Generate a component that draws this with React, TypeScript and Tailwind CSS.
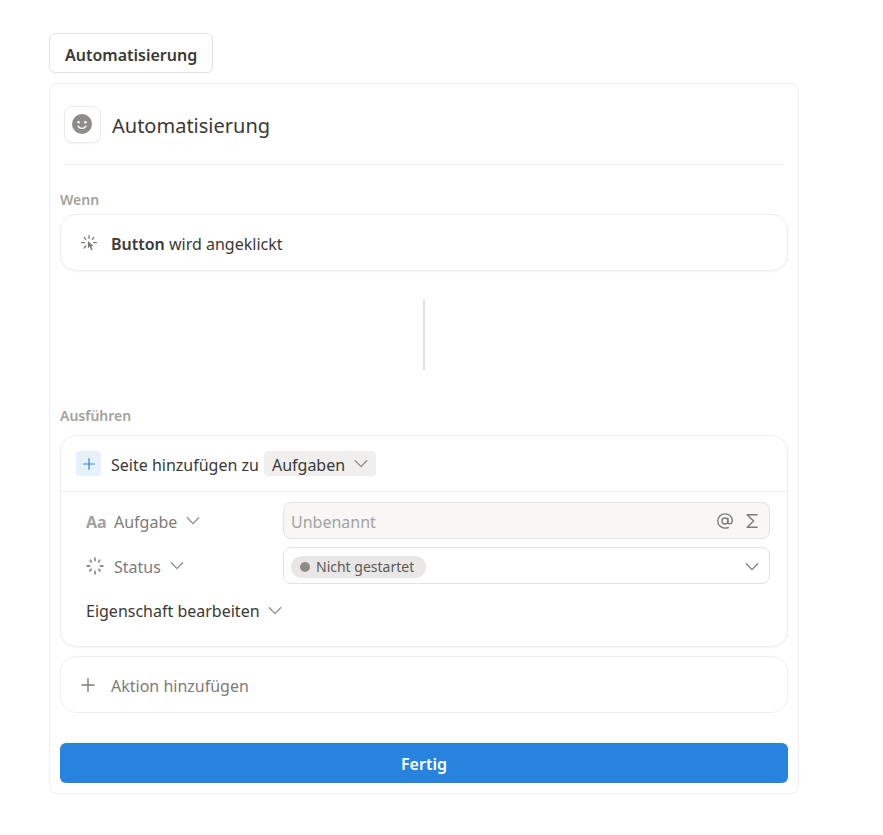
import React, { useState } from "react";

interface IIcon {
  className?: string;
}

const ChevronIcon = ({ className = "" }: IIcon) => (
  <svg
    viewBox="0 0 14 14"
    fill="none"
    stroke="currentColor"
    strokeWidth="1.3"
    strokeLinecap="round"
    strokeLinejoin="round"
    aria-hidden="true"
    className={`h-3.5 w-3.5 shrink-0 pointer-events-none ${className}`}>
    <path d="M1.300 3.800 7 9.600l5.700-5.800" />
  </svg>
);

const PlusIcon = ({ className = "" }: IIcon) => (
  <svg
    viewBox="0 0 14 14"
    fill="none"
    stroke="currentColor"
    strokeWidth="1.4"
    strokeLinecap="round"
    aria-hidden="true"
    className={`shrink-0 ${className}`}>
    <path d="M7 .8v12.4M.8 7h12.4" />
  </svg>
);

const SmileIcon = () => (
  <svg viewBox="0 0 20 20" aria-hidden="true" className="h-5 w-5">
    <circle cx="10" cy="10" r="10" fill="#8d8c88" />
    <circle cx="6.6" cy="8.2" r="1.3" fill="#fff" />
    <circle cx="13.4" cy="8.2" r="1.3" fill="#fff" />
    <path
      d="M6.2 12.200c.9 1.600 2.200 2.200 3.800 2.200s2.900-.6 3.800-2.200"
      fill="none"
      stroke="#fff"
      strokeWidth="1.4"
      strokeLinecap="round"
    />
  </svg>
);

const ClickIcon = () => (
  <svg
    viewBox="0 0 16 16"
    aria-hidden="true"
    className="h-4 w-4 shrink-0 text-[#7d7c78]">
    <path
      d="M8 .6v2.800M3.200 2.400l1.500 2M12.800 2.400l-1.500 2M.6 7.700h2.800M12.600 7.700h2.800M3.200 13l1.500-2"
      fill="none"
      stroke="currentColor"
      strokeWidth="1.3"
      strokeLinecap="round"
    />
    <path
      d="M6.900 6v7.200l1.800-1.500 1.500 3.500 1.500-.6-1.500-3.400 2.400-.2z"
      fill="currentColor"
    />
  </svg>
);

const StatusIcon = () => (
  <svg
    viewBox="0 0 18 18"
    fill="none"
    stroke="currentColor"
    strokeWidth="1.800"
    strokeLinecap="round"
    aria-hidden="true"
    className="h-[18px] w-[18px] shrink-0">
    <path d="M9 1.200v2.300M9 14.500v2.300M1.200 9h2.300M14.500 9h2.300M4.400 3.300l.9 1.600M13.600 3.300l-.9 1.600M3.900 13.800l1.300-1.400M14.100 13.800l-1.300-1.400" />
  </svg>
);

const AtIcon = () => (
  <svg
    viewBox="0 0 16 16"
    fill="none"
    stroke="currentColor"
    strokeWidth="1.400"
    strokeLinecap="round"
    aria-hidden="true"
    className="h-4 w-4">
    <circle cx="7.900" cy="8" r="3" />
    <path d="M10.900 5.200v3.700c0 1.300.7 2 1.800 2 1.500 0 2.500-1.300 2.500-3.100C15.200 3.800 12.200.9 8.100.9 3.900.9.8 3.900.8 8s3 7.100 7.200 7.100c1.300 0 2.400-.2 3.300-.6" />
  </svg>
);

const SigmaIcon = () => (
  <svg
    viewBox="0 0 14 16"
    fill="none"
    stroke="currentColor"
    strokeWidth="1.500"
    strokeLinecap="round"
    strokeLinejoin="round"
    aria-hidden="true"
    className="h-4 w-3.5">
    <path d="M12 1.700H2.200L8.600 8l-6.400 6.300H12" />
  </svg>
);

interface IPlainSelect {
  label: string;
  options: string[];
  className?: string;
}

const PlainSelect = ({ label, options, className = "" }: IPlainSelect) => (
  <span className="relative inline-flex items-center">
    <select
      aria-label={label}
      className={`appearance-none field-sizing-content cursor-pointer outline-none ${className}`}>
      {options.map((option) => (
        <option key={option}>{option}</option>
      ))}
    </select>
    <ChevronIcon className="absolute right-2 text-[#8d8c88]" />
  </span>
);

const SectionTitle = ({ children }: { children: React.ReactNode }) => (
  <h2 className="text-sm leading-5 font-semibold text-[#a3a29e]">{children}</h2>
);

const App = () => {
  const [name, setName] = useState("");

  return (
    <main className="bg-white pt-[33px] pb-10 pl-[49px] pr-[84px] font-['Noto_Sans',sans-serif] text-base text-[#3a3936]">
      <button
        type="button"
        className="flex h-10 items-center rounded-md border border-[#e3e2e0] px-[15px] pt-1 font-semibold cursor-pointer">
        Automatisierung
      </button>

      <section className="mt-2.5 rounded-lg border border-[#f0efee] px-2.5 pb-2.5">
        <header className="mx-1 flex items-center border-b border-[#f0efee] pt-[22px] pb-[21px]">
          <button
            type="button"
            aria-label="Symbol"
            className="flex h-[37px] w-[37px] items-center justify-center rounded-lg border border-[#ebebea] pr-0.5 pb-0.5 shadow-xs cursor-pointer">
            <SmileIcon />
          </button>
          <h1 className="ml-[11px] pt-0.5 text-xl">Automatisierung</h1>
        </header>

        <div className="mt-[25px]">
          <SectionTitle>Wenn</SectionTitle>
          <div className="mt-1 flex h-[57px] items-center rounded-2xl border border-[#f0efee] px-5 shadow-xs">
            <ClickIcon />
            <p className="ml-3.5 pt-0.5">
              <span className="font-semibold">Button</span> wird angeklickt
            </p>
          </div>
        </div>

        <div className="mx-auto mt-[29px] h-[70px] w-0.5 bg-[#e3e2e0]" />

        <div className="mt-9">
          <SectionTitle>Ausführen</SectionTitle>
          <div className="mt-[9px] rounded-2xl border border-[#f0efee] shadow-xs">
            <div className="flex h-14 items-center border-b border-[#f0efee] px-[15px]">
              <span className="flex h-[25px] w-[25px] items-center justify-center rounded bg-[#e5f2fc] text-[#2783de]">
                <PlusIcon className="h-3 w-3" />
              </span>
              <span className="ml-2.5 mr-[5px] pt-0.5">Seite hinzufügen zu</span>
              <PlainSelect
                label="Datenbank"
                options={["Aufgaben", "Projekte"]}
                className="h-[25px] rounded bg-[#f0efed] pt-0.5 pl-2 pr-[31px]"
              />
            </div>

            <div className="flex flex-col gap-2 pt-2.5 pr-[17px] pb-[18px] pl-[25px] text-[#7d7c78]">
              <div className="grid grid-cols-[197px_1fr] items-center">
                <div className="flex items-center">
                  <span
                    aria-hidden="true"
                    className="w-7 pt-0.5 font-bold text-[#a3a29e]">
                    Aa
                  </span>
                  <PlainSelect
                    label="Eigenschaft"
                    options={["Aufgabe", "Status"]}
                    className="pt-0.5 pr-[31px]"
                  />
                </div>
                <div className="flex h-[37px] items-center rounded-lg border border-[#e3e2e0] bg-[#f8f7f6] px-[7px]">
                  <input
                    type="text"
                    aria-label="Aufgabe"
                    placeholder="Unbenannt"
                    value={name}
                    onChange={(e) => setName(e.target.value)}
                    className="min-w-0 grow bg-transparent pt-0.5 outline-none placeholder:text-[#a3a29e]"
                  />
                  <button
                    type="button"
                    aria-label="Erwähnen"
                    className="cursor-pointer">
                    <AtIcon />
                  </button>
                  <button
                    type="button"
                    aria-label="Formel"
                    className="ml-3 mr-[3px] cursor-pointer">
                    <SigmaIcon />
                  </button>
                </div>
              </div>

              <div className="grid grid-cols-[197px_1fr] items-center">
                <div className="flex items-center">
                  <span className="w-7 text-[#8d8c88]">
                    <StatusIcon />
                  </span>
                  <PlainSelect
                    label="Eigenschaft"
                    options={["Status", "Aufgabe"]}
                    className="pt-0.5 pr-[31px]"
                  />
                </div>
                <div className="flex h-[37px] items-center justify-between rounded-lg border border-[#e3e2e0] pl-[7px] pr-2.5 pt-0.5">
                  <span className="flex h-[22px] items-center rounded-full bg-[#e8e7e5] pl-[9px] pr-3">
                    <span className="mr-1.5 h-2.5 w-2.5 rounded-full bg-[#8d8c88]" />
                    <select
                      aria-label="Status"
                      className="appearance-none field-sizing-content cursor-pointer bg-transparent text-sm text-[#5a5955] outline-none">
                      <option>Nicht gestartet</option>
                      <option>In Bearbeitung</option>
                      <option>Erledigt</option>
                    </select>
                  </span>
                  <ChevronIcon />
                </div>
              </div>

              <button
                type="button"
                className="flex h-9 items-center gap-2 self-start pt-0.5 text-[#3a3936] cursor-pointer">
                Eigenschaft bearbeiten
                <ChevronIcon className="text-[#8d8c88]" />
              </button>
            </div>
          </div>

          <button
            type="button"
            className="mt-[9px] flex h-[57px] w-full items-center rounded-2xl border border-[#f0efee] px-5 text-[#7d7c78] cursor-pointer">
            <PlusIcon className="h-3.5 w-3.5" />
            <span className="ml-4 pt-0.5">Aktion hinzufügen</span>
          </button>
        </div>

        <button
          type="button"
          className="mt-[30px] h-10 w-full rounded-md bg-[#2783de] pt-0.5 font-semibold text-white cursor-pointer">
          Fertig
        </button>
      </section>
    </main>
  );
};

export default App;
